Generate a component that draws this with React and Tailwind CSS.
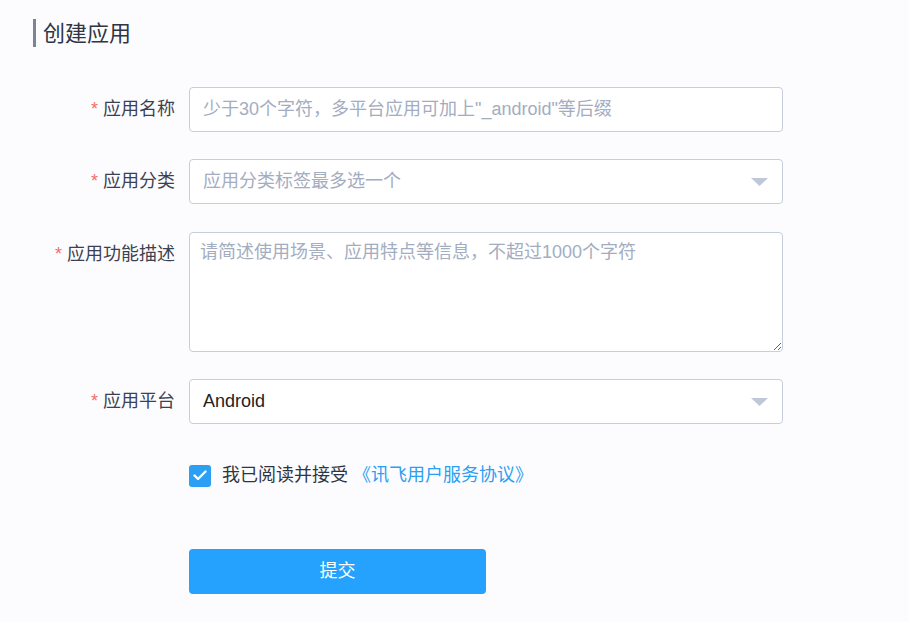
import React from 'react';

const font = { fontFamily: '"Liberation Sans", "Noto Sans CJK SC", sans-serif' };

function Label({ children }) {
  return (
    <div className="w-[189px] shrink-0 pr-[14px] text-right text-[18px] leading-[45px] text-[#3b4151]">
      <span className="mr-[5px] text-[#f56c6c]">*</span>
      {children}
    </div>
  );
}

function Caret() {
  return (
    <svg width="17" height="8" viewBox="0 0 17 8" className="absolute right-[14px] top-[18px]">
      <path d="M0 0 H17 L8.5 8 Z" fill="#bfc8d8" />
    </svg>
  );
}

export default function App() {
  return (
    <div className="min-h-[622px] w-full bg-[#fcfcfe] pt-[19px]" style={font}>
      <div className="ml-[33px] flex h-[28px] items-center border-l-[3px] border-[#7d8594] pl-[7px] text-[22px] text-[#2f3542]">
        创建应用
      </div>

      <div className="mt-[40px] flex flex-col">
        <div className="flex">
          <Label>应用名称</Label>
          <input
            className="h-[45px] w-[594px] rounded-[4px] border border-[#c6cedb] bg-white px-[13px] text-[18px] text-[#222] outline-none placeholder:text-[#a3adbf]"
            placeholder={'少于30个字符，多平台应用可加上"_android"等后缀'}
          />
        </div>

        <div className="mt-[27px] flex">
          <Label>应用分类</Label>
          <div className="relative flex h-[45px] w-[594px] items-center rounded-[4px] border border-[#c6cedb] bg-white px-[13px] text-[18px] text-[#a3adbf]">
            应用分类标签最多选一个
            <Caret />
          </div>
        </div>

        <div className="mt-[28px] flex">
          <Label>应用功能描述</Label>
          <textarea
            className="h-[120px] w-[594px] rounded-[4px] border border-[#c6cedb] bg-white px-[10px] py-[6px] text-[18px] leading-[26px] text-[#222] outline-none placeholder:text-[#a3adbf]"
            placeholder="请简述使用场景、应用特点等信息，不超过1000个字符"
          />
        </div>

        <div className="mt-[27px] flex">
          <Label>应用平台</Label>
          <div className="relative flex h-[45px] w-[594px] items-center rounded-[4px] border border-[#c6cedb] bg-white px-[13px] text-[18px] text-[#222]">
            Android
            <Caret />
          </div>
        </div>

        <div className="ml-[189px] mt-[38px] flex items-center text-[18px]">
          <span className="flex h-[22px] w-[22px] items-center justify-center rounded-[3px] bg-[#2b9ff3]">
            <svg width="14" height="11" viewBox="0 0 14 11">
              <path d="M1.5 5.5 L5 9 L12.5 1.5" fill="none" stroke="#fff" strokeWidth="2.4" strokeLinecap="round" strokeLinejoin="round" />
            </svg>
          </span>
          <span className="ml-[11px] text-[#2f3542]">我已阅读并接受</span>
          <span className="ml-[5px] text-[#2b9ff3]">《讯飞用户服务协议》</span>
        </div>

        <button className="ml-[189px] mt-[60px] h-[45px] w-[297px] rounded-[4px] bg-[#25a2fd] text-[18px] text-white">
          提交
        </button>
      </div>
    </div>
  );
}
